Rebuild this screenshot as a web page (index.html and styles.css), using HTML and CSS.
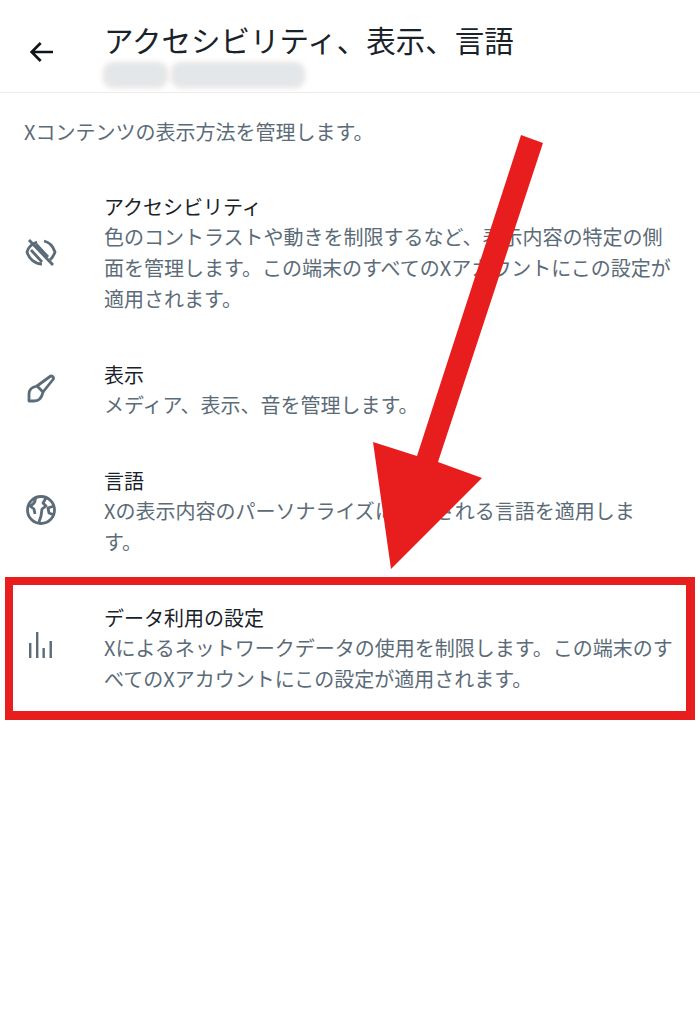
FILE: index.html
```html
<!DOCTYPE html>
<html lang="ja">

<head>
    <meta charset="UTF-8">
    <title>アクセシビリティ、表示、言語</title>
    <link rel="stylesheet" href="styles.css">
</head>

<body>
    <header class="topbar">
        <svg class="back-icon" viewBox="0 0 24 24"><path d="M7.414 13l5.043 5.04-1.414 1.42L3.586 12l7.457-7.46 1.414 1.42L7.414 11H21v2H7.414z"/></svg>
        <div class="topbar-text">
            <h1>アクセシビリティ、表示、言語</h1>
            <div class="blurred-name">
                <span class="blob blob-short"></span>
                <span class="blob blob-long"></span>
            </div>
        </div>
    </header>

    <p class="intro">Xコンテンツの表示方法を管理します。</p>

    <main class="settings">
        <div class="setting">
            <svg class="setting-icon line-icon" viewBox="0 0 32 32">
                <path d="M4 4l24 25"/>
                <path d="M19 5c5 1 9 5 11 11-1 3-3 6-5 8"/>
                <path d="M12 6C7 8 3 11 2 16c2 7 8 12 15 12"/>
                <path d="M6 14l11 12M11 8l12 13"/>
            </svg>
            <div class="setting-text">
                <h2>アクセシビリティ</h2>
                <p>色のコントラストや動きを制限するなど、表示内容の特定の側面を管理します。この端末のすべてのXアカウントにこの設定が適用されます。</p>
            </div>
        </div>
        <div class="setting">
            <svg class="setting-icon line-icon" viewBox="0 0 32 32">
                <path d="M4 28v-7c0-4 3-7 8-8l6 6c-1 5-4 9-9 9z"/>
                <path d="M12 13L25 3.500c2-1.500 4.500 1 3 3L18 19"/>
            </svg>
            <div class="setting-text">
                <h2>表示</h2>
                <p>メディア、表示、音を管理します。</p>
            </div>
        </div>
        <div class="setting">
            <svg class="setting-icon line-icon" viewBox="0 0 32 32">
                <circle cx="16" cy="16" r="13.5"/>
                <path d="M10 4c1 4-1 6-5 8l4 3 1 5"/>
                <path d="M21 4l-3 5 3 3-4 3-1 7-2 6"/>
                <path d="M29 12l-6 2 1 5 5 2"/>
            </svg>
            <div class="setting-text">
                <h2>言語</h2>
                <p>Xの表示内容のパーソナライズに使用される言語を適用しま<br>す。</p>
            </div>
        </div>
        <div class="setting">
            <svg class="setting-icon" viewBox="0 0 24 24"><path d="M3 9h1.800v11.250H3zM8.250.75h1.800v19.500h-1.800zM13.100 12.750h1.800v7.500h-1.800zM18.400 7.500h1.800v12.750h-1.800z"/></svg>
            <div class="setting-text">
                <h2>データ利用の設定</h2>
                <p>Xによるネットワークデータの使用を制限します。この端末のすべてのXアカウントにこの設定が適用されます。</p>
            </div>
        </div>
    </main>

    <!-- annotation drawn over the screenshot -->
    <div class="highlight-box"></div>
    <svg class="arrow" viewBox="0 0 700 1024"><polygon points="521,135 543,143 438,462 482,478 391,569 373,442 417,456"/></svg>
</body>

</html>
```
FILE: styles.css
```css
body {
    font-family: "Noto Sans CJK JP", "Noto Sans", sans-serif;
    margin: 0;
    width: 700px;
    min-height: 1024px;
    background-color: white;
    color: #5b6b78;
    position: relative;
    overflow: hidden;
}

.topbar {
    display: flex;
    height: 92px;
    padding-left: 25px;
    border-bottom: 1px solid #f0ebe9;
}

.back-icon {
    width: 32px;
    height: 32px;
    margin-top: 36px;
    fill: #0f1419;
}

.topbar-text {
    margin-left: 47px;
}

.topbar-text h1 {
    margin: 20px 0 0;
    font-size: 29.5px;
    font-weight: 400;
    line-height: 38px;
    color: #1a2229;
}

.blurred-name {
    display: flex;
    gap: 5px;
    width: 205px;
    margin-top: 5px;
}

.blob {
    height: 24px;
    background-color: #e4e7e9;
    border-radius: 10px;
    box-shadow: 0 0 3px 2px #f3ecea;
    filter: blur(2px);
}

.blob-short {
    width: 63px;
}

.blob-long {
    width: 132px;
}

.intro {
    margin: 0;
    padding: 25px 24px 0;
    font-size: 20px;
    line-height: 27px;
}

.settings {
    display: flex;
    flex-direction: column;
    gap: 47px;
    padding-top: 48px;
}

.setting {
    display: flex;
    align-items: center;
    padding-left: 25px;
    padding-right: 20px;
}

.setting-icon {
    width: 32px;
    height: 32px;
    margin-bottom: 4px;
    flex-shrink: 0;
    fill: #5b6b78;
}

.line-icon {
    fill: none;
    stroke: #5b6b78;
    stroke-width: 2.8;
    stroke-linejoin: round;
}

.setting-text {
    margin-left: 47px;
}

.setting-text h2 {
    margin: 0;
    font-size: 20px;
    font-weight: 400;
    line-height: 28px;
    color: #1a2229;
}

.setting-text p {
    margin: 0;
    font-size: 20px;
    line-height: 31px;
}

.highlight-box {
    position: absolute;
    left: 5px;
    top: 577px;
    width: 690px;
    height: 143px;
    box-sizing: border-box;
    border: 8px solid #e81e1e;
    border-right-width: 9px;
    border-bottom-width: 9px;
}

.arrow {
    position: absolute;
    left: 0;
    top: 0;
    width: 700px;
    height: 1024px;
    fill: #e81e1e;
}
```
